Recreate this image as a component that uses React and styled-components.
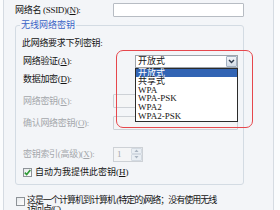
import React from 'react';
import styled, { createGlobalStyle } from 'styled-components';

const GlobalStyle = createGlobalStyle`
  html, body {
    margin: 0;
    padding: 0;
  }
  body {
    width: 280px;
    height: 210px;
    overflow: hidden;
    background: #fbfcfd;
    font-family: "Liberation Serif", "Noto Sans CJK SC", serif;
    font-size: 9px;
    color: #141414;
  }
`;

const Screen = styled.div`
  position: relative;
  width: 280px;
  height: 210px;
  overflow: hidden;
  background: #fbfcfd;
`;

const Dialog = styled.div`
  margin-left: 3px;
  width: 271px;
  height: 210px;
  box-sizing: border-box;
  border-left: 1px solid #d5dbe2;
  border-right: 1px solid #d5dbe2;
  background: #f3f5f8;
  padding: 3px 0 0 11px;
`;

const TopRow = styled.div`
  display: flex;
  align-items: center;
  height: 14px;
`;

const Label = styled.span`
  flex-shrink: 0;
  width: ${(p) => p.$w || 90}px;
  white-space: nowrap;
  line-height: 12px;
  letter-spacing: -0.3px;
  color: ${(p) => (p.$disabled ? '#a4a7ab' : '#141414')};
`;

const TextBox = styled.div`
  box-sizing: border-box;
  width: ${(p) => p.$w}px;
  height: 14px;
  border: 1px solid ${(p) => (p.$disabled ? '#cdd1d6' : '#b7bcc3')};
  border-radius: 1px;
  background: ${(p) => (p.$disabled ? '#f4f5f6' : '#ffffff')};
`;

const Group = styled.fieldset`
  margin: 2px 0 0 0;
  width: 229px;
  height: 166px;
  box-sizing: border-box;
  border: 1px solid #d3dbe3;
  border-radius: 3px;
  padding: 0 0 0 4px;
  min-inline-size: 0;
`;

const Legend = styled.legend`
  padding: 0 1px;
  line-height: 12px;
  color: #3b63c6;
`;

const GroupBody = styled.div`
  padding: 5px 0 0 3px;
`;

const Row = styled.div`
  display: flex;
  align-items: center;
  height: 14px;
  margin-top: ${(p) => p.$gap || 0}px;
  margin-left: ${(p) => p.$indent || 0}px;
`;

const ComboWrap = styled.div`
  position: relative;
  margin-left: 22px;
  width: 103px;
  height: 13px;
`;

const ComboBox = styled.div`
  display: flex;
  align-items: center;
  justify-content: space-between;
  box-sizing: border-box;
  width: 100%;
  height: 100%;
  border: 1px solid #9ea4ab;
  background: #ffffff;
  padding-left: 2px;
  line-height: 11px;
`;

const DropButton = styled.div`
  display: flex;
  align-items: center;
  justify-content: center;
  box-sizing: border-box;
  width: 11px;
  height: 11px;
  border: 1px solid #a3b1c2;
  border-radius: 1px;
  background: linear-gradient(#f2f5f9, #d3dce7);
`;

const DropList = styled.div`
  position: absolute;
  top: 13px;
  left: 0;
  z-index: 5;
  width: 103px;
  height: 54px;
  box-sizing: border-box;
  border: 1px solid #2b2b2b;
  background: #ffffff;
`;

const Option = styled.div`
  height: 8.66px;
  line-height: 8.66px;
  padding-left: 2px;
  white-space: nowrap;
  background: ${(p) => (p.$active ? '#3264b4' : 'transparent')};
  color: ${(p) => (p.$active ? '#ffffff' : '#141414')};
`;

const Spinner = styled.div`
  display: flex;
  box-sizing: border-box;
  width: 30px;
  height: 15px;
  border: 1px solid #cdd1d6;
  background: #f4f5f6;
`;

const SpinValue = styled.span`
  flex: 1;
  padding-left: 3px;
  line-height: 13px;
  color: #a4a7ab;
`;

const SpinButtons = styled.div`
  display: flex;
  flex-direction: column;
  width: 11px;
`;

const SpinHalf = styled.div`
  display: flex;
  align-items: center;
  justify-content: center;
  flex: 1;
  background: #e9eef3;
  border: 1px solid #d3dae2;
  border-radius: 1px;
`;

const Check = styled.span`
  display: flex;
  align-items: center;
  justify-content: center;
  flex-shrink: 0;
  box-sizing: border-box;
  width: 9px;
  height: 9px;
  border: 1px solid #8d9297;
  background: linear-gradient(135deg, #e6e9ec, #ffffff);
`;

const CheckText = styled.span`
  margin-left: ${(p) => p.$gap || 3}px;
  line-height: ${(p) => p.$lh || 12}px;
  letter-spacing: ${(p) => p.$ls || 0}px;
  white-space: nowrap;
`;

const BottomRow = styled.div`
  display: flex;
  align-items: flex-start;
  margin: 11px 0 0 1px;
`;

const BottomCheck = styled(Check)`
  margin-top: 1px;
`;

const Annotation = styled.div`
  position: absolute;
  left: 116px;
  top: 50px;
  z-index: 6;
  width: 137px;
  height: 78px;
  box-sizing: border-box;
  border: 1px solid #e6474c;
  border-radius: 7px;
  pointer-events: none;
`;

const options = ['开放式', '共享式', 'WPA', 'WPA-PSK', 'WPA2', 'WPA2-PSK'];

function Chevron() {
  return (
    <svg width="7" height="5" viewBox="0 0 7 5">
      <path d="M1 1 L3.5 3.6 L6 1" fill="none" stroke="#2c3a4c" strokeWidth="1.4" />
    </svg>
  );
}

function Tri({ up }) {
  return (
    <svg width="5" height="3" viewBox="0 0 5 3">
      <path d={up ? 'M0.5 3 L2.5 0.5 L4.5 3 Z' : 'M0.5 0 L2.5 2.5 L4.5 0 Z'} fill="#a9b4c0" />
    </svg>
  );
}

function CheckMark() {
  return (
    <svg width="7" height="7" viewBox="0 0 7 7">
      <path d="M0.8 3.6 L2.7 5.6 L6.3 1" fill="none" stroke="#2f9a37" strokeWidth="1.6" />
    </svg>
  );
}

export default function App() {
  return (
    <Screen>
      <GlobalStyle />
      <Dialog>
        <TopRow>
          <Label $w={98}>
            网络名 (SSID)(<u>N</u>):
          </Label>
          <TextBox $w={131} />
        </TopRow>

        <Group>
          <Legend>无线网络密钥</Legend>
          <GroupBody>
            <Row $indent={-1}>
              <Label>此网络要求下列密钥:</Label>
            </Row>
            <Row $gap={4}>
              <Label>
                网络验证(<u>A</u>):
              </Label>
              <ComboWrap>
                <ComboBox>
                  开放式
                  <DropButton>
                    <Chevron />
                  </DropButton>
                </ComboBox>
                <DropList>
                  {options.map((o, i) => (
                    <Option key={o} $active={i === 0}>
                      {o}
                    </Option>
                  ))}
                </DropList>
              </ComboWrap>
            </Row>
            <Row $gap={4}>
              <Label>
                数据加密(<u>D</u>):
              </Label>
            </Row>
            <Row $gap={8}>
              <Label $disabled>
                网络密钥(<u>K</u>):
              </Label>
              <TextBox $w={125} $disabled />
            </Row>
            <Row $gap={8}>
              <Label $disabled>
                确认网络密钥(<u>O</u>):
              </Label>
              <TextBox $w={125} $disabled />
            </Row>
            <Row $gap={17}>
              <Label $disabled>
                密钥索引(高级)(<u>X</u>):
              </Label>
              <Spinner>
                <SpinValue>1</SpinValue>
                <SpinButtons>
                  <SpinHalf>
                    <Tri up />
                  </SpinHalf>
                  <SpinHalf>
                    <Tri />
                  </SpinHalf>
                </SpinButtons>
              </Spinner>
            </Row>
            <Row $gap={4}>
              <Check>
                <CheckMark />
              </Check>
              <CheckText>
                自动为我提供此密钥(<u>H</u>)
              </CheckText>
            </Row>
          </GroupBody>
        </Group>

        <BottomRow>
          <BottomCheck />
          <CheckText $gap={2} $lh={9} $ls={-1}>
            这是一个计算机到计算机 (特定的)网络；没有使用无线
            <br />
            访问点(<u>C</u>)
          </CheckText>
        </BottomRow>
      </Dialog>
      <Annotation />
    </Screen>
  );
}
